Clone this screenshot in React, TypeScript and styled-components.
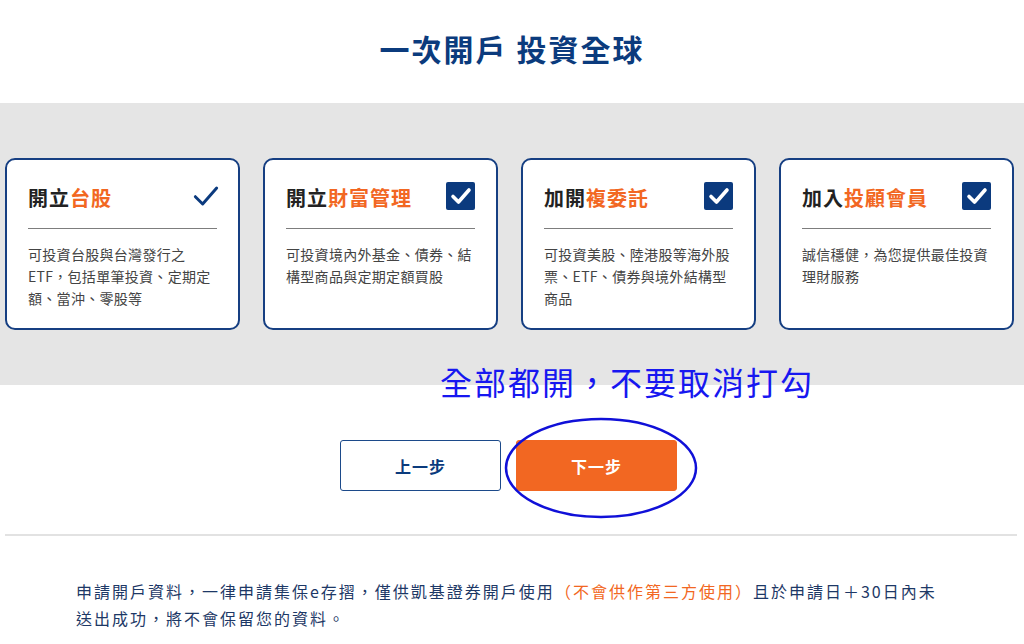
import React from 'react';
import styled, { createGlobalStyle } from 'styled-components';

const GlobalStyle = createGlobalStyle`
    body {
        margin: 0;
        background: #ffffff;
        font-family: "Noto Sans CJK TC", "Noto Sans", sans-serif;
    }
`;

const StyledHeader = styled.header`
    height: 103px;
    padding-bottom: 7px;
    box-sizing: border-box;
    display: flex;
    align-items: center;
    justify-content: center;
`;

const StyledTitle = styled.h1`
    margin: 0;
    font-size: 30px;
    font-weight: 700;
    letter-spacing: 2px;
    color: #0b3b7d;
`;

const StyledBand = styled.section`
    height: 282px;
    background: #e5e5e5;
    padding: 55px 0 0 5px;
    box-sizing: border-box;
`;

const StyledCards = styled.div`
    display: grid;
    grid-template-columns: repeat(4, 235px);
    gap: 23px;
`;

const StyledCard = styled.div`
    height: 172px;
    box-sizing: border-box;
    background: #ffffff;
    border: 2px solid #163f82;
    border-radius: 10px;
    padding: 21px 21px 0;
`;

const StyledCardHead = styled.div`
    height: 29px;
    display: flex;
    align-items: center;
    justify-content: space-between;
`;

const StyledCardTitle = styled.h3`
    margin: 0;
    padding-top: 3px;
    font-size: 20px;
    font-weight: 700;
    letter-spacing: 1px;
    color: #222222;
    & span {
        color: #f26722;
    }
`;

const StyledBox = styled.div`
    width: 29px;
    height: 28px;
    border-radius: 2px;
    background: #0b3a7e;
    display: flex;
    align-items: center;
    justify-content: center;
`;

const StyledPlainCheck = styled.div`
    margin-right: -5px;
    display: flex;
`;

const StyledDivider = styled.div`
    height: 1px;
    margin-top: 18px;
    background: #7d7d7d;
`;

const StyledDesc = styled.p`
    margin: 14px 0 0;
    font-size: 14px;
    line-height: 22px;
    letter-spacing: 0.3px;
    color: #444444;
`;

const StyledActions = styled.section`
    position: relative;
    padding: 55px 7px 43px 0;
    display: flex;
    justify-content: center;
    gap: 15px;
`;

const StyledNote = styled.div`
    position: absolute;
    top: -27px;
    left: 440px;
    font-family: "Liberation Serif", "Noto Sans CJK TC", serif;
    font-size: 32px;
    letter-spacing: 2px;
    color: #1717f0;
    white-space: nowrap;
`;

const StyledButton = styled.button<{ primary?: boolean }>`
    width: 161px;
    height: 51px;
    border-radius: 3px;
    border: 1px solid ${p => p.primary ? '#f26722' : '#1c4a8a'};
    background: ${p => p.primary ? '#f26722' : '#ffffff'};
    color: ${p => p.primary ? '#ffffff' : '#0b3b7d'};
    font-family: "Noto Sans CJK TC", sans-serif;
    font-size: 16px;
    font-weight: 700;
    letter-spacing: 1px;
`;

const StyledCircled = styled.div`
    position: relative;
    & svg {
        position: absolute;
        left: -12px;
        top: -23px;
        pointer-events: none;
    }
`;

const StyledRule = styled.hr`
    margin: 0 7px 0 5px;
    border: none;
    height: 2px;
    background: #e2e2e2;
`;

const StyledFooter = styled.p`
    margin: 0;
    padding: 42px 0 0 76px;
    width: 866px;
    font-size: 16px;
    line-height: 27px;
    letter-spacing: 2px;
    color: #1d3866;
    & span {
        color: #f26722;
    }
`;

const cards = [
    { lead: '開立', hi: '台股', plain: true, desc: '可投資台股與台灣發行之ETF，包括單筆投資、定期定額、當沖、零股等' },
    { lead: '開立', hi: '財富管理', desc: '可投資境內外基金、債券、結構型商品與定期定額買股' },
    { lead: '加開', hi: '複委託', desc: '可投資美股、陸港股等海外股票、ETF、債券與境外結構型商品' },
    { lead: '加入', hi: '投顧會員', desc: '誠信穩健，為您提供最佳投資理財服務' },
];

function Check({ color, size }: { color: string; size: number }) {
    return (
        <svg width={size} height={size} viewBox="0 0 24 24">
            <polyline points="4,12.5 9.5,18 20,6" fill="none" stroke={color} strokeWidth={color === '#ffffff' ? 3.6 : 2.2} strokeLinecap="round" strokeLinejoin="round" />
        </svg>
    );
}

function App() {
    return (
        <>
            <GlobalStyle />
            <StyledHeader>
                <StyledTitle>一次開戶 投資全球</StyledTitle>
            </StyledHeader>
            <StyledBand>
                <StyledCards>
                    {cards.map(c => (
                        <StyledCard key={c.hi}>
                            <StyledCardHead>
                                <StyledCardTitle>{c.lead}<span>{c.hi}</span></StyledCardTitle>
                                {c.plain
                                    ? <StyledPlainCheck><Check color="#0b3a7e" size={32} /></StyledPlainCheck>
                                    : <StyledBox><Check color="#ffffff" size={24} /></StyledBox>}
                            </StyledCardHead>
                            <StyledDivider />
                            <StyledDesc>{c.desc}</StyledDesc>
                        </StyledCard>
                    ))}
                </StyledCards>
            </StyledBand>
            <StyledActions>
                <StyledNote>全部都開，不要取消打勾</StyledNote>
                <StyledButton>上一步</StyledButton>
                <StyledCircled>
                    <StyledButton primary>下一步</StyledButton>
                    <svg width="194" height="102" viewBox="0 0 194 102">
                        <ellipse cx="97" cy="51" rx="95" ry="49" fill="none" stroke="#1010d8" strokeWidth="2.5" />
                    </svg>
                </StyledCircled>
            </StyledActions>
            <StyledRule />
            <StyledFooter>
                申請開戶資料，一律申請集保e存摺，僅供凱基證券開戶使用<span>（不會供作第三方使用）</span>且於申請日＋30日內未送出成功，將不會保留您的資料。
            </StyledFooter>
        </>
    );
}

export default App;
